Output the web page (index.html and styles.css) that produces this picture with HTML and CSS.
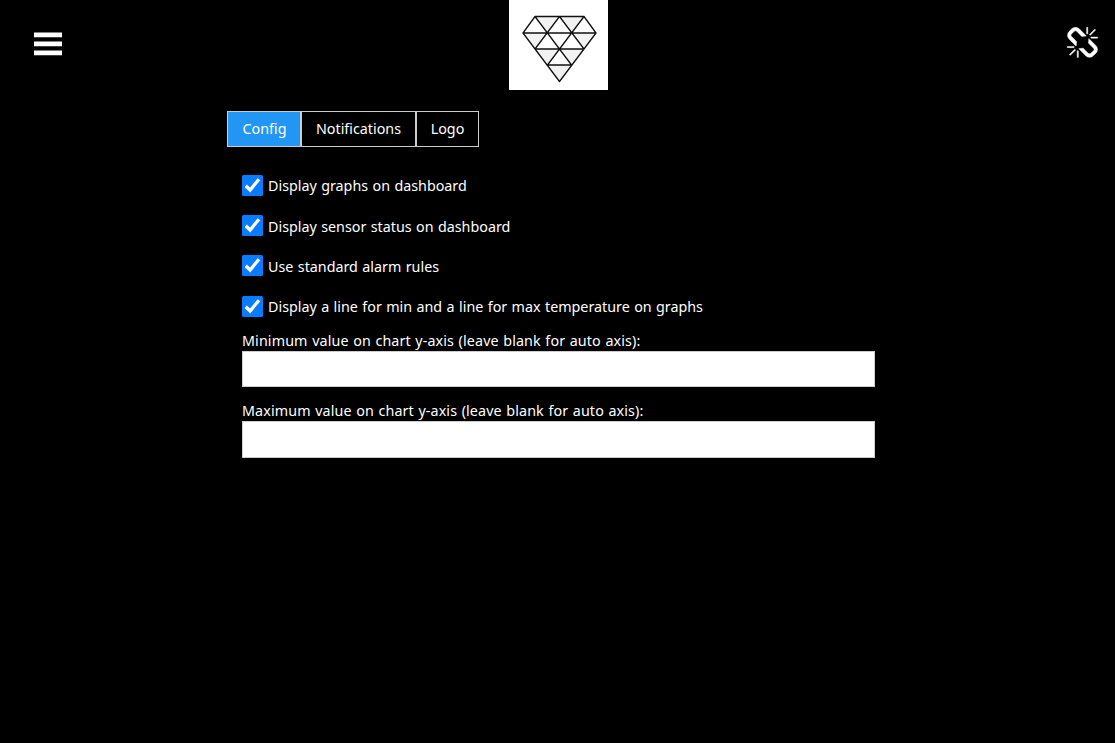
FILE: index.html
```html
<!DOCTYPE html>
<html lang="en">
<head>
<meta charset="utf-8">
<title>Config</title>
<link rel="stylesheet" href="styles.css">
</head>
<body>
<header class="topbar">
  <svg class="menu-icon" viewBox="0 0 28 24" fill="#fff"><path d="M0 .5h28v4.800H0zM0 9.500h28v4.800H0zM0 18.500h28v4.800H0z"/></svg>
  <svg class="logo" viewBox="0 0 99 90">
    <path fill="#fff" d="M0 0h99v90H0z"/>
    <path fill="#f2f2f2" d="M26 16.500h24.500L38.500 33zM50.500 16.500H75L62.500 33zM14 33h24.500L26 49zM62.500 33H87L75 49zM26 49h24.500L38.500 65zM50.500 49H75L62.500 65zM38.500 65h24l-12 16z"/>
    <path fill="none" stroke="#111" stroke-width="1.300" stroke-linejoin="round" d="M26 16.500h49L87 33 50.500 81.500 14 33zM14 33h73M26 49h49M38.500 65h24M26 16.500L62.500 65M50.500 16.500L75 49M50.500 16.500L26 49M75 16.500L38.500 65"/>
  </svg>
  <svg class="link-icon" viewBox="0 0 1792 1792" fill="#fff" stroke="#fff" stroke-width="24"><path d="M503 1271l-256 256q-10 9-23 9-12 0-23-9-9-10-9-23t9-23l256-256q10-9 23-9t23 9q9 10 9 23t-9 23zm169 41v320q0 14-9 23t-23 9-23-9-9-23v-320q0-14 9-23t23-9 23 9 9 23zm-224-224q0 14-9 23t-23 9h-320q-14 0-23-9t-9-23 9-23 23-9h320q14 0 23 9t9 23zm1264 128q0 120-85 203l-147 146q-83 83-203 83-121 0-204-85l-334-335q-21-21-42-56l239-18 273 274q27 27 68 27.500t68-26.500l147-146q28-28 28-67 0-40-28-68l-274-275 18-239q35 21 56 42l336 336q84 86 84 204zm-617-724l-239 18-273-274q-28-28-68-28-39 0-68 27l-147 146q-28 28-28 67 0 40 28 68l274 274-18 240q-35-21-56-42l-336-336q-84-86-84-204 0-120 85-203l147-146q83-83 203-83 121 0 204 85l334 335q21 21 42 56zm633 84q0 14-9 23t-23 9h-320q-14 0-23-9t-9-23 9-23 23-9h320q14 0 23 9t9 23zm-544-544v320q0 14-9 23t-23 9-23-9-9-23v-320q0-14 9-23t23-9 23 9 9 23zm407 151l-256 256q-11 9-23 9t-23-9q-9-10-9-23t9-23l256-256q10-9 23-9t23 9q9 10 9 23t-9 23z"/></svg>
</header>
<main class="content">
  <nav class="tabs">
    <button class="tab tab-config active">Config</button>
    <button class="tab tab-notifications">Notifications</button>
    <button class="tab tab-logo">Logo</button>
  </nav>
  <form class="panel">
    <label class="check"><svg class="box" viewBox="0 0 21 21"><rect width="21" height="21" rx="1.500" fill="#0a7cff"/><path d="M3.800 10.800l4.300 4.200L17 4.200" fill="none" stroke="#fff" stroke-width="3.300"/></svg><span>Display graphs on dashboard</span></label>
    <label class="check check-status"><svg class="box" viewBox="0 0 21 21"><rect width="21" height="21" rx="1.500" fill="#0a7cff"/><path d="M3.800 10.800l4.300 4.200L17 4.200" fill="none" stroke="#fff" stroke-width="3.300"/></svg><span>Display sensor status on dashboard</span></label>
    <label class="check check-rules"><svg class="box" viewBox="0 0 21 21"><rect width="21" height="21" rx="1.500" fill="#0a7cff"/><path d="M3.800 10.800l4.300 4.200L17 4.200" fill="none" stroke="#fff" stroke-width="3.300"/></svg><span>Use standard alarm rules</span></label>
    <label class="check check-lines"><svg class="box" viewBox="0 0 21 21"><rect width="21" height="21" rx="1.500" fill="#0a7cff"/><path d="M3.800 10.800l4.300 4.200L17 4.200" fill="none" stroke="#fff" stroke-width="3.300"/></svg><span>Display a line for min and a line for max temperature on graphs</span></label>
    <label class="field"><span>Minimum value on chart y-axis (leave blank for auto axis):</span><input class="input" type="text"></label>
    <label class="field"><span>Maximum value on chart y-axis (leave blank for auto axis):</span><input class="input input-max" type="text"></label>
  </form>
</main>
</body>
</html>
```
FILE: styles.css
```css
* { box-sizing: border-box; }
body {
  margin: 0;
  min-height: 743px;
  background: #000;
  color: #fff;
  font: 14.3px/20px "Noto Sans", "DejaVu Sans", sans-serif;
}
.topbar {
  display: grid;
  grid-template-columns: 1fr 99px 1fr;
  height: 90px;
  padding-left: 2px;
}
.menu-icon { width: 28px; height: 24px; margin: 31.500px 0 0 32px; }
.logo { width: 99px; height: 90px; }
.link-icon { width: 33px; height: 33px; margin: 26.500px 16px 0 0; justify-self: end; }
.content { width: 663px; margin: 21px 0 0 227px; }
.tabs { display: flex; height: 36px; }
.tab {
  padding: 0;
  border: 1px solid #ccc;
  background: #000;
  color: #fff;
  font: inherit;
  white-space: nowrap;
}
.tab-config { width: 74px; padding-left: 1px; }
.tab-notifications { width: 115px; }
.tab-logo { width: 63px; }
.tab.active { background: #2196f3; }
.panel { display: flex; flex-direction: column; padding: 28px 15px 0; }
.check { display: flex; gap: 5px; height: 21px; margin-bottom: 19px; white-space: nowrap; word-spacing: .7px; }
.check span { padding-top: 1px; }
.box { width: 21px; height: 21px; flex: none; }
.check-status span, .check-rules span { padding-top: 2px; }
.check-rules { margin-bottom: 20px; }
.check-lines { margin-bottom: 14px; }
.field { display: flex; flex-direction: column; margin-bottom: 14px; white-space: nowrap; letter-spacing: .12px; word-spacing: .7px; }
.field span { height: 20px; }
.input { width: 633px; height: 36px; padding: 8px; border: 1px solid #ccc; background: #fff; }
.input-max { height: 37px; }
```
